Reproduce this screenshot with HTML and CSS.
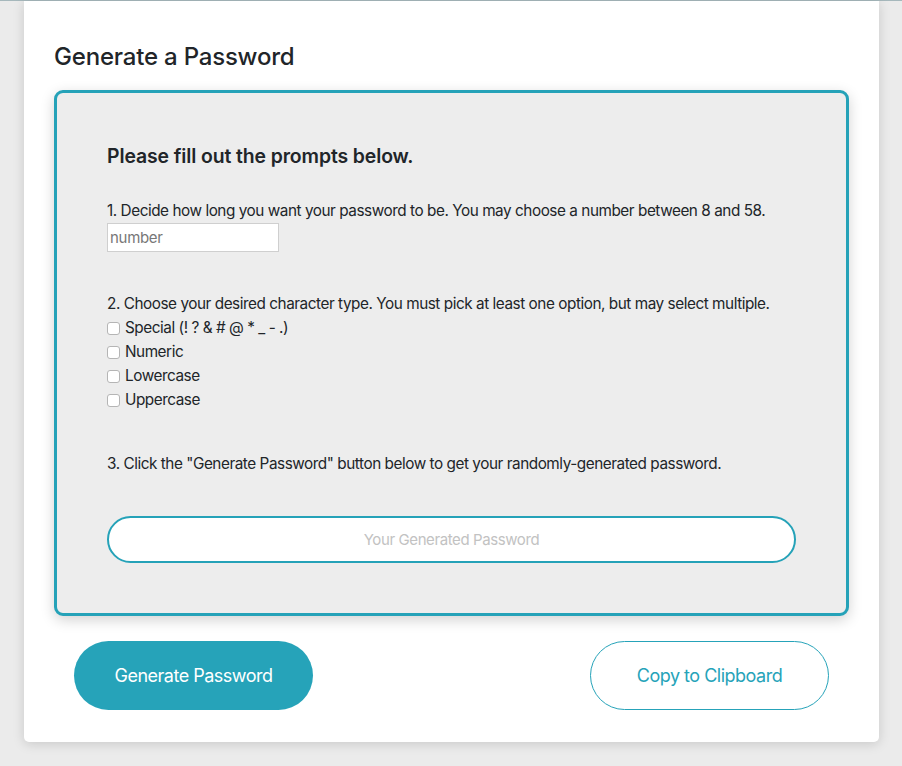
FILE: index.html
```html
<!DOCTYPE html>
<html lang="en">
<head>
<meta charset="utf-8">
<title>Password Generator</title>
<link rel="stylesheet" href="styles.css">
</head>
<body>
<div class="topline"></div>
<main class="card">
  <h2 class="title">Generate a Password</h2>
  <section class="panel">
    <h5 class="prompt">Please fill out the prompts below.</h5>
    <div class="step">
      <p class="line">1. Decide how long you want your password to be. You may choose a number between 8 and 58.</p>
      <input class="num" type="text" placeholder="number">
    </div>
    <div class="step">
      <p class="line">2. Choose your desired character type. You must pick at least one option, but may select multiple.</p>
      <label class="check"><input type="checkbox"><span>Special (! ? &amp; # @ * _ - .)</span></label>
      <label class="check"><input type="checkbox"><span>Numeric</span></label>
      <label class="check"><input type="checkbox"><span>Lowercase</span></label>
      <label class="check"><input type="checkbox"><span>Uppercase</span></label>
    </div>
    <div class="step">
      <p class="line">3. Click the "Generate Password" button below to get your randomly-generated password.</p>
    </div>
    <textarea class="output" placeholder="Your Generated Password" readonly></textarea>
  </section>
  <div class="actions">
    <button class="btn btn-fill">Generate Password</button>
    <button class="btn btn-outline">Copy to Clipboard</button>
  </div>
</main>
</body>
</html>
```
FILE: styles.css
```css
* { box-sizing: border-box; }
html, body { margin: 0; padding: 0; }
body {
  background: #ebebeb;
  font-family: Inter, "Noto Sans", "Liberation Sans", sans-serif;
  color: #212529;
  font-size: 16px;
  line-height: 24px;
  height: 766px;
  overflow: hidden;
}
.topline {
  height: 1px;
  background: #a6b8bc;
}
.card {
  width: 855px;
  margin-left: 24px;
  background: #fff;
  border-radius: 0 0 5px 5px;
  box-shadow: 0 2px 12px rgba(0,0,0,0.15);
  padding: 41px 30px 32px 30px;
}
.title {
  margin: 0 0 19px 0;
  font-size: 24px;
  line-height: 29px;
  font-weight: 500;
  letter-spacing: -0.2px;
}
.panel {
  background: #ededed;
  border: 3px solid #25a2b8;
  border-radius: 9px;
  box-shadow: 0 4px 14px rgba(0,0,0,0.18);
  padding: 51px 50px 50px 50px;
  display: flex;
  flex-direction: column;
}
.prompt {
  margin: 0 0 31px 0;
  font-size: 19.4px;
  line-height: 24px;
  font-weight: 600;
  letter-spacing: -0.1px;
}
.step { margin-bottom: 40px; display: flex; flex-direction: column; align-items: flex-start; }
.line { margin: 0; font-size: 15.3px; letter-spacing: -0.45px; white-space: nowrap; }
.num {
  width: 172px;
  height: 29px;
  border: 1px solid #cfcfcf;
  background: #fff;
  font: inherit;
  font-size: 15px;
  letter-spacing: -0.3px;
  padding: 0 2px;
  color: #333;
  outline: none;
}
.num::placeholder { color: #777; }
.check {
  display: flex;
  align-items: center;
  gap: 5px;
  height: 24px;
  font-size: 15.3px;
  letter-spacing: -0.45px;
}
.check input {
  appearance: none;
  -webkit-appearance: none;
  margin: 0;
  width: 13px;
  height: 13px;
  border: 1px solid #b5b5b5;
  border-radius: 3px;
  background: #fff;
}
.output {
  height: 47px;
  width: 100%;
  border: 2px solid #25a2b8;
  border-radius: 24px;
  background: #fff;
  resize: none;
  text-align: center;
  font: inherit;
  font-size: 15px;
  padding: 10px 20px;
  outline: none;
  overflow: hidden;
  letter-spacing: -0.4px;
}
.output::placeholder { color: #c2c2c2; }
.actions {
  display: flex;
  justify-content: space-between;
  padding: 25px 20px 0 20px;
}
.btn {
  width: 239px;
  height: 69px;
  border-radius: 35px;
  font-family: inherit;
  font-size: 18px;
  letter-spacing: -0.5px;
  cursor: pointer;
}
.btn-fill {
  background: #26a3b9;
  color: #fff;
  border: none;
}
.btn-outline {
  background: #fff;
  color: #26a3b9;
  border: 1px solid #26a3b9;
}
```
